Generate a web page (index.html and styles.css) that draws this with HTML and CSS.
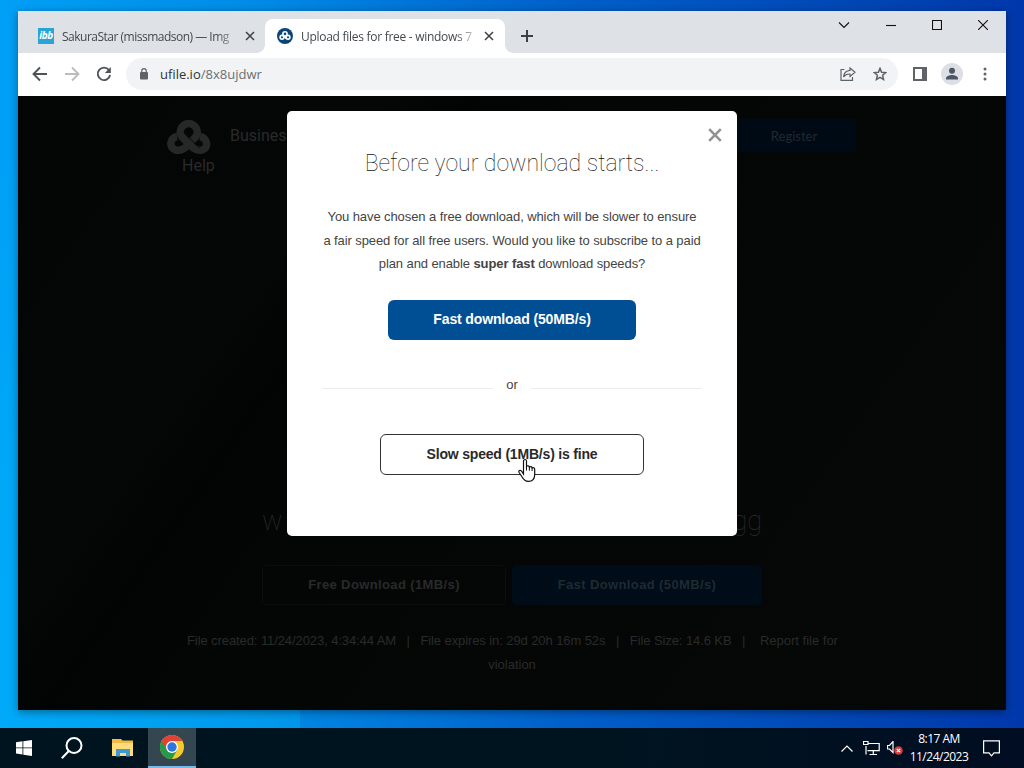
FILE: index.html
```html
<!DOCTYPE html>
<html lang="en">
<head>
    <meta charset="UTF-8">
    <meta name="viewport" content="width=device-width, initial-scale=1.0">
    <title>Upload files for free - windows 7</title>
    <link rel="stylesheet" href="styles.css">
</head>
<body>
    <div class="desktop">
        <div class="window">
            <div class="tab-strip">
                <div class="tab">
                    <span class="favicon-ibb">ibb</span>
                    <span class="tab-title title-first">SakuraStar (missmadson) — Img</span>
                    <svg class="tab-close" width="10" height="10" viewBox="0 0 10 10"><path d="M1 1l8 8M9 1l-8 8"/></svg>
                </div>
                <div class="tab active">
                    <svg class="favicon" width="16" height="16" viewBox="0 0 16 16">
                        <circle cx="8" cy="8" r="8" fill="#0b4478"/>
                        <g fill="none" stroke="#fff" stroke-width="1.6">
                            <circle cx="8" cy="5.9" r="2.1"/>
                            <circle cx="5" cy="9.3" r="1.9"/>
                            <circle cx="11" cy="9.3" r="1.9"/>
                            <path d="M6.3 7.4l3.3 3.2"/>
                        </g>
                    </svg>
                    <span class="tab-title title-second">Upload files for free - windows 7</span>
                    <svg class="tab-close" width="10" height="10" viewBox="0 0 10 10"><path d="M1 1l8 8M9 1l-8 8"/></svg>
                </div>
                <svg class="new-tab" width="12" height="12" viewBox="0 0 12 12"><path d="M6 0v12M0 6h12"/></svg>
                <div class="window-controls">
                    <svg width="12" height="10" viewBox="0 0 12 10"><path d="M1 2.5l5 5 5-5"/></svg>
                    <svg width="10" height="10" viewBox="0 0 10 10"><path d="M0 5.5h10"/></svg>
                    <svg width="10" height="10" viewBox="0 0 10 10"><path d="M.5.5h9v9h-9z"/></svg>
                    <svg width="10" height="10" viewBox="0 0 10 10"><path d="M0 0l10 10M10 0L0 10"/></svg>
                </div>
            </div>

            <div class="toolbar">
                <svg class="nav-icon" width="16" height="16" viewBox="0 0 16 16"><path d="M15 8H2M8 1.5L1.5 8 8 14.5"/></svg>
                <svg class="nav-icon disabled" width="16" height="16" viewBox="0 0 16 16"><path d="M1 8h13M8 1.5L14.500 8 8 14.500"/></svg>
                <svg class="nav-icon" width="16" height="16" viewBox="0 0 16 16"><path d="M13 4.200A6.200 6.200 0 1 0 14.100 9"/><path class="solid" d="M14.800 1v6H8.800z"/></svg>
                <div class="address-bar">
                    <svg width="8" height="12" viewBox="0 0 8 12"><rect y="4" width="8" height="7.500" rx="1" fill="#5f6368"/><path d="M1.800 4.500V2.900a2.200 2.200 0 0 1 4.400 0v1.600" fill="none" stroke="#5f6368" stroke-width="1.200"/></svg>
                    <span class="url">ufile.io<span class="path">/8x8ujdwr</span></span>
                    <svg class="outline" width="16" height="14" viewBox="0 0 16 14"><path d="M4.500 2.500H1v10.800h11.500V10M10 1l5 4.300L10 9.500V7C7 6.800 5 7.800 3.600 10c.3-4 2.600-6.300 6.400-6.600z"/></svg>
                    <svg class="outline star" width="14" height="14" viewBox="0 0 14 14"><path d="M7 1.400l1.600 3.900 4.200.3-3.200 2.700 1 4.200L7 10.300l-3.600 2.200 1-4.200-3.200-2.700 4.200-.3z"/></svg>
                </div>
                <svg class="side-panel" width="14" height="14" viewBox="0 0 14 14"><path d="M0 0h14v14H0z" fill="#5f6368"/><path d="M2 2h7v10H2z" fill="#fff"/></svg>
                <svg class="profile" width="22" height="22" viewBox="0 0 22 22"><circle cx="11" cy="11" r="11" fill="#dcdfe5"/><circle cx="11" cy="7.700" r="3" fill="#4d5566"/><path d="M5 16.500v-1.200c0-2 3.500-3.300 6-3.300s6 1.300 6 3.300v1.200z" fill="#4d5566"/></svg>
                <svg class="menu" width="4" height="14" viewBox="0 0 4 14" fill="#5f6368"><circle cx="2" cy="2" r="1.500"/><circle cx="2" cy="7" r="1.500"/><circle cx="2" cy="12" r="1.500"/></svg>
            </div>

            <div class="page">
                <header class="site-header">
                    <div class="site-nav">
                        <svg class="site-logo" width="46" height="36" viewBox="0 0 46 36">
                            <g fill="none" stroke="#262727" stroke-width="7.500">
                                <path d="M15.500 17.500A8.500 8.500 0 1 1 30 17.500L22 26c-3 3.500-7 6-12.500 5C3 29 3 19 11 17.500"/>
                                <path d="M34 17.500c8 1.500 9 12 2 13.500-6 1-9-2-12-5l-9-9"/>
                            </g>
                            <path d="M18 13.500l16 16" fill="none" stroke="#0a0b0b" stroke-width="1"/>
                        </svg>
                        <a class="nav-business">Business</a>
                        <a class="nav-register">Register</a>
                    </div>
                    <a class="nav-help">Help</a>
                </header>
                <h1 class="file-name"><span>w</span><span>.ogg</span></h1>
                <div class="download-buttons">
                    <a class="free-btn">Free Download (1MB/s)</a>
                    <a class="fast-btn">Fast Download (50MB/s)</a>
                </div>
                <div class="file-info">
                    <div class="info-line"><span>File created: 11/24/2023, 4:34:44 AM</span><span>|</span><span>File expires in: 29d 20h 16m 52s</span><span>|</span><span>File Size: 14.6 KB</span><span>|</span><span class="report">Report file for</span></div>
                    <div>violation</div>
                </div>

                <div class="modal">
                    <svg class="modal-close" width="14" height="14" viewBox="0 0 14 14"><path d="M1.200 1.200l11.600 11.600M12.800 1.200L1.200 12.800"/></svg>
                    <h2>Before your download starts...</h2>
                    <div class="modal-text">
                        <p>You have chosen a free download, which will be slower to ensure</p>
                        <p>a fair speed for all free users. Would you like to subscribe to a paid</p>
                        <p>plan and enable <b>super fast</b> download speeds?</p>
                    </div>
                    <button class="btn btn-fast">Fast download (50MB/s)</button>
                    <div class="divider"><span>or</span></div>
                    <button class="btn btn-slow">Slow speed (1MB/s) is fine</button>
                </div>
            </div>
        </div>
        <svg class="cursor" width="20" height="26" viewBox="0 0 20 26">
            <path d="M6.500 16V3.200c0-2.300 3-2.300 3 0v5.300c.7-1.200 2.700-.9 2.900.6.800-.9 2.500-.6 2.700.8 1-.7 2.600 0 2.600 1.500v5.100c0 4.200-2.400 6.900-6.400 6.900-3.400 0-4.800-1.800-6.200-4.400l-3-4.500c-1-1.700.9-2.800 2.300-1.600z" fill="#fff" stroke="#111" stroke-width="1.200"/>
            <path d="M9.500 8v4.500M12.400 9v3.700M15.100 10v3" stroke="#111" fill="none"/>
        </svg>
    </div>

    <div class="taskbar">
        <div class="task-item">
            <svg width="16" height="16" viewBox="0 0 16 16" fill="#fff"><path d="M0 2.200l6.500-.9v6.200H0zM7.300 1.200L16 0v7.500H7.300zM0 8.300h6.500v6.200L0 13.600zM7.300 8.300H16V16l-8.700-1.200z"/></svg>
        </div>
        <div class="task-item">
            <svg width="22" height="22" viewBox="0 0 22 22" fill="none" stroke="#fff" stroke-width="2"><circle cx="13" cy="8.500" r="7.500"/><path d="M7.800 14L.8 21.200"/></svg>
        </div>
        <div class="task-item">
            <svg width="22" height="18" viewBox="0 0 22 18"><path d="M0 0h9l1.500 1.500H21V17H0z" fill="#f0bb45"/><path d="M0 4h21v13H0z" fill="#ffdc79"/><path d="M4 17.500V10h14v7.500h-4V14H8v3.500z" fill="#4297cf"/></svg>
        </div>
        <div class="task-item running">
            <svg width="24" height="24" viewBox="0 0 24 24">
                <circle cx="12" cy="12" r="12" fill="#f6c92d"/>
                <path d="M12 12L1.600 6A12 12 0 0 0 12 24l5.200-9z" fill="#259a4b"/>
                <path d="M1.600 6A12 12 0 0 1 22.400 6H12l-5.200 9z" fill="#df4336"/>
                <circle cx="12" cy="12" r="6" fill="#fff"/>
                <circle cx="12" cy="12" r="4.700" fill="#2e75df"/>
            </svg>
        </div>
        <div class="tray">
            <svg width="12" height="7" viewBox="0 0 12 7"><path d="M.5 6.500L6 1l5.500 5.500"/></svg>
            <svg class="network" width="17" height="14" viewBox="0 0 17 14"><path d="M5.500 2.500h10.700v7.200H4.500M3 5v8.500M.5.500h4.500v3H.5zM10.300 9.700v3.500M6.500 13.500h7.500"/></svg>
            <svg class="volume" width="16" height="14" viewBox="0 0 16 14"><path d="M.5 4.500h2l3.500-4v11l-3.500-3.500h-2z"/><circle cx="11.500" cy="9.500" r="4.300" fill="#d43c3c" stroke="none"/><path d="M9.800 7.800l3.400 3.400M13.200 7.800l-3.400 3.400"/></svg>
            <div class="clock">
                <div class="time">8:17 AM</div>
                <div class="date">11/24/2023</div>
            </div>
            <svg width="17" height="17" viewBox="0 0 17 17"><path d="M.6.800h15.800v12H11l-2.500 3-2.500-3H.6z"/></svg>
        </div>
    </div>
</body>
</html>
```

FILE: styles.css
```css
* {
    margin: 0;
    padding: 0;
    box-sizing: border-box;
}
body {
    width: 1024px;
    height: 768px;
    overflow: hidden;
    font-family: "Liberation Sans", Arial, sans-serif;
}
svg {
    flex-shrink: 0;
}
.desktop {
    position: relative;
    height: 728px;
    padding: 11px 18px 18px;
    background:
        linear-gradient(180deg, transparent 20%, rgba(0, 200, 255, 0.25) 80%) 0 0 / 300px 100% no-repeat,
        linear-gradient(90deg, #00a0f6 0%, #008be6 25%, #0060ca 55%, #0045b4 85%, #0038ac 100%);
}
.window {
    width: 988px;
    height: 699px;
    box-shadow: 0 2px 8px rgba(0, 0, 0, 0.4);
}

/* tabs */
.tab-strip {
    display: flex;
    height: 42px;
    padding: 8px 18px 0 7px;
    background-color: #dee1e6;
}
.tab {
    display: flex;
    align-items: center;
    width: 240px;
    height: 34px;
    padding: 0 11px 0 12px;
    font-family: "Open Sans", "Noto Sans", sans-serif;
    font-size: 12px;
    color: #45494d;
}
.tab:first-child {
    padding: 0 10px 0 13px;
}
.tab.active {
    position: relative;
    background-color: #fff;
    border-radius: 8px 8px 0 0;
}
.tab.active::before,
.tab.active::after {
    content: "";
    position: absolute;
    bottom: 0;
    width: 8px;
    height: 8px;
}
.tab.active::before {
    left: -8px;
    background: radial-gradient(circle at 0 0, transparent 7.5px, #fff 8px);
}
.tab.active::after {
    right: -8px;
    background: radial-gradient(circle at 100% 0, transparent 7.5px, #fff 8px);
}
.favicon-ibb {
    width: 16px;
    height: 16px;
    background-color: #29a5d5;
    color: #fff;
    font-size: 10px;
    font-style: italic;
    font-weight: bold;
    line-height: 15px;
    text-align: center;
    letter-spacing: -0.5px;
}
.tab-title {
    flex: 1;
    margin: 0 8px;
    white-space: nowrap;
    -webkit-mask-image: linear-gradient(90deg, #000 88%, transparent 103%);
    mask-image: linear-gradient(90deg, #000 88%, transparent 103%);
}
.title-first {
    letter-spacing: -0.5px;
}
.title-second {
    letter-spacing: -0.28px;
}
.tab-close,
.new-tab {
    fill: none;
    stroke: #3c4043;
    stroke-width: 1.5;
}
.new-tab {
    margin: 11px 0 0 16px;
    stroke-width: 2;
}
.window-controls {
    display: flex;
    gap: 36px;
    margin-left: auto;
    fill: none;
    stroke: #111;
    stroke-width: 1.1;
}
.window-controls svg {
    margin-top: 1px;
}

/* toolbar */
.toolbar {
    display: flex;
    align-items: center;
    height: 43px;
    padding: 0 19px 1px 14px;
    background-color: #fff;
}
.nav-icon {
    margin-right: 16px;
    fill: none;
    stroke: #4f5357;
    stroke-width: 1.9;
}
.nav-icon.disabled {
    stroke: #babcbe;
}
.nav-icon .solid {
    fill: #4f5357;
    stroke: none;
}
.address-bar {
    display: flex;
    align-items: center;
    width: 772px;
    height: 32px;
    margin-left: -2px;
    padding: 0 11px 0 14px;
    border-radius: 16px;
    background-color: #f1f3f4;
}
.url {
    flex: 1;
    margin-left: 12px;
    font-family: "Open Sans", "Noto Sans", sans-serif;
    font-size: 13px;
    color: #303336;
}
.url .path {
    color: #6b6f73;
}
.outline {
    fill: none;
    stroke: #5f6368;
    stroke-width: 1.2;
}
.star {
    margin-left: 17px;
    stroke-width: 1.5;
}
.side-panel {
    margin-left: 15px;
}
.profile {
    margin-left: 14px;
}
.menu {
    margin-left: auto;
}

/* dimmed page behind the modal */
.page {
    position: relative;
    height: 614px;
    background: linear-gradient(125deg, #040505 0%, #050606 26%, #020303 32%, #040606 40%, #060707 100%);
    color: #292a2a;
}
.site-header {
    padding: 23px 150px 0 148px;
    font-family: Roboto, sans-serif;
    font-size: 16px;
}
.site-nav {
    display: flex;
    height: 36px;
}
.nav-business {
    margin: 7px 0 0 18px;
}
.nav-register {
    width: 124px;
    height: 33px;
    margin-left: auto;
    background-color: #000a14;
    color: #202930;
    font-family: Lato, sans-serif;
    font-size: 13px;
    line-height: 34px;
    text-align: center;
}
.nav-help {
    display: block;
    margin: 1px 0 0 16px;
    line-height: 20px;
}
.file-name {
    display: flex;
    justify-content: space-between;
    margin: 329px 244px 0;
    font-family: Roboto, sans-serif;
    font-size: 27px;
    font-weight: 100;
    line-height: 32px;
}
.download-buttons {
    display: flex;
    gap: 6px;
    margin: 28px 244px 0;
    font-size: 13px;
    font-weight: bold;
    letter-spacing: 0.38px;
    line-height: 37px;
    text-align: center;
}
.free-btn,
.fast-btn {
    height: 40px;
    border-radius: 5px;
}
.free-btn {
    width: 244px;
    border: 1px solid #0c0d0d;
}
.fast-btn {
    width: 250px;
    background-color: #000c18;
    border: 1px solid #000c18;
    color: #1f2a32;
}
.file-info {
    margin-top: 24px;
    font-size: 13px;
    line-height: 24px;
    text-align: center;
}
.info-line {
    display: flex;
    justify-content: space-between;
    width: 651px;
    margin-left: 169px;
    letter-spacing: -0.09px;
    white-space: nowrap;
}
.report {
    margin-left: 4px;
    letter-spacing: 0;
}

/* modal */
.modal {
    position: absolute;
    top: 15px;
    left: 269px;
    display: flex;
    flex-direction: column;
    align-items: center;
    width: 450px;
    height: 425px;
    padding-top: 36px;
    border-radius: 5px;
    background-color: #fff;
    color: #444;
}
.modal-close {
    position: absolute;
    top: 17px;
    right: 15px;
    fill: none;
    stroke: #929292;
    stroke-width: 2.6;
}
.modal h2 {
    font-family: Roboto, sans-serif;
    font-size: 23px;
    font-weight: 100;
    line-height: 34px;
    color: #111;
    white-space: nowrap;
}
.modal-text {
    margin-top: 24px;
    font-size: 13px;
    line-height: 23.5px;
    letter-spacing: -0.09px;
    text-align: center;
    white-space: nowrap;
}
.btn {
    border-radius: 6px;
    font-family: inherit;
    font-size: 14px;
    font-weight: bold;
}
.btn-fast {
    width: 248px;
    height: 40px;
    margin-top: 24px;
    padding-bottom: 2px;
    border: none;
    background-color: #004f94;
    color: #fff;
    letter-spacing: -0.13px;
}
.divider {
    display: flex;
    align-items: center;
    gap: 13px;
    width: 380px;
    margin-top: 36px;
    font-size: 13px;
    line-height: 18px;
}
.divider::before,
.divider::after {
    content: "";
    flex: 1;
    height: 1px;
    margin-top: 7px;
    background-color: #ebeeef;
}
.btn-slow {
    width: 264px;
    height: 41px;
    margin-top: 40px;
    padding-bottom: 1px;
    border: 1px solid #333;
    background-color: #fff;
    color: #292929;
    letter-spacing: -0.19px;
}
.cursor {
    position: absolute;
    left: 517px;
    top: 458px;
}

/* taskbar */
.taskbar {
    display: flex;
    height: 40px;
    background: linear-gradient(90deg, #00141f, #001420 60%, #000d22);
}
.task-item {
    display: flex;
    align-items: center;
    justify-content: center;
    width: 48px;
}
.task-item:nth-child(2) {
    margin-right: 3px;
}
.task-item.running {
    margin-left: 1px;
    background-color: #34464f;
    border-bottom: 2px solid #76b9ed;
}
.tray {
    display: flex;
    align-items: center;
    margin-left: auto;
    padding-right: 24px;
    fill: none;
    stroke: #fff;
    stroke-width: 1.2;
}
.network {
    margin-left: 10px;
}
.volume {
    margin-left: 7px;
}
.clock {
    width: 72px;
    margin: 0 8px 0 0;
    color: #fff;
    font-family: "Open Sans", "Noto Sans", sans-serif;
    font-size: 12px;
    line-height: 18px;
    text-align: center;
    letter-spacing: -0.5px;
    stroke: none;
}
```
